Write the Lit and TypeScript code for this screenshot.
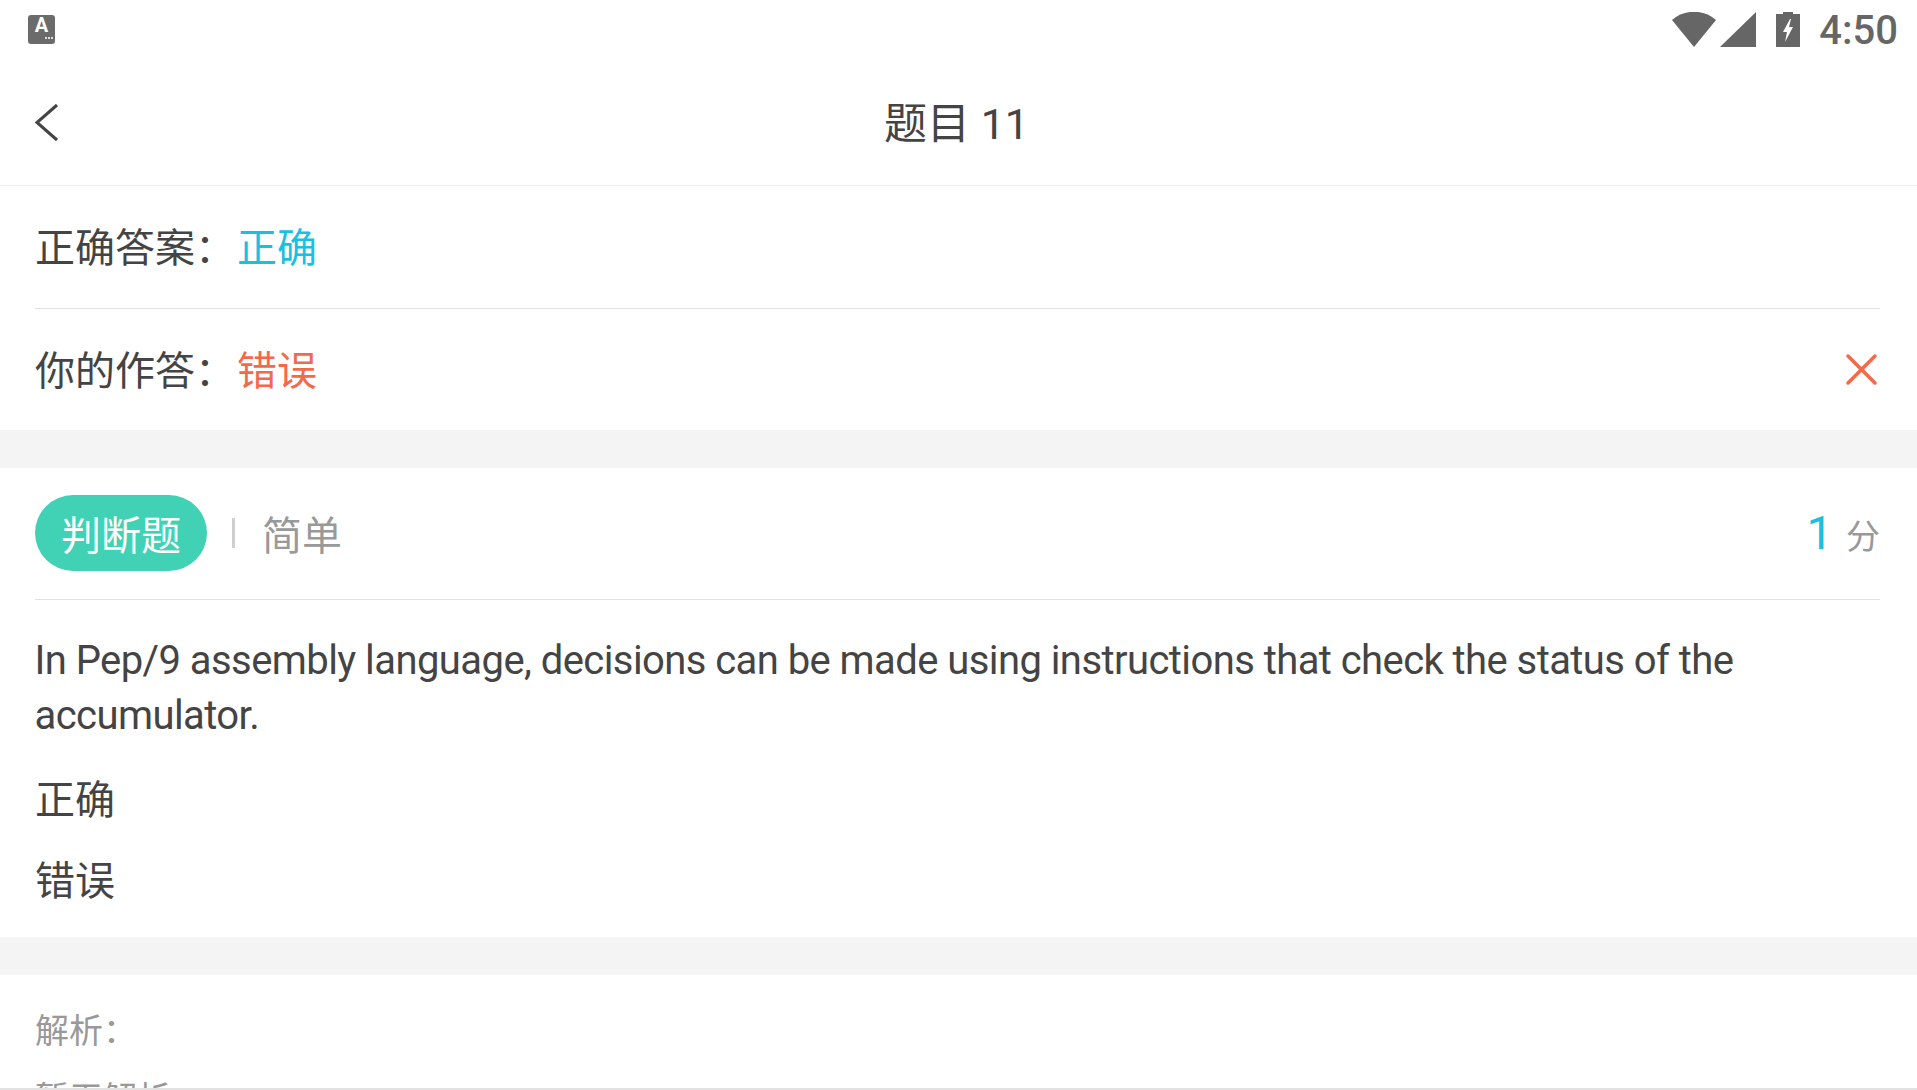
import { LitElement, html, css } from "lit";
import { customElement } from "lit/decorators.js";

@customElement("app-root")
export class AppRoot extends LitElement {
  static styles = css`
    :host {
      display: block;
      width: 1917px;
      height: 1090px;
      overflow: hidden;
      background: #fff;
      color: #444;
      font-family: Roboto, "Noto Sans CJK SC", sans-serif;
      font-size: 40px;
      box-sizing: border-box;
    }
    .frame { height: 1088px; overflow: hidden; }
    .rule { height: 2px; background: #e2e2e2; }
    .status {
      height: 60px;
      display: flex;
      align-items: flex-start;
      justify-content: space-between;
      padding: 12px 19px 0 28px;
      box-sizing: border-box;
    }
    .ime {
      width: 27px; height: 29px; margin-top: 3px;
      background: #6b6b6b; border-radius: 3px;
      color: #fff; font-size: 20px; font-weight: 700;
      display: flex; flex-direction: column; align-items: center;
      line-height: 21px;
    }
    .ime i { display: flex; gap: 1px; align-self: flex-end; margin: 1px 2px 0 0; }
    .ime b { width: 2px; height: 2px; background: #ddd; display: block; }
    .sys { display: flex; align-items: flex-start; color: #666; }
    .sys svg { display: block; fill: #666; }
    .wifi { width: 44px; height: 35px; }
    .signal { width: 36px; height: 35px; margin-left: 4px; }
    .battery { width: 24px; height: 35px; margin-left: 20px; }
    .time { font-size: 40px; font-weight: 500; line-height: 35px; margin: 1px 0 0 19px; }
    .nav {
      height: 126px;
      display: flex;
      align-items: center;
      justify-content: center;
      border-bottom: 1px solid #efefef;
      box-sizing: border-box;
      position: relative;
      font-size: 43px;
    }
    .back { position: absolute; left: 34px; top: 42px; width: 26px; height: 40px; }
    .title { margin: 0 4px 6px 0; }
    .row {
      display: flex;
      align-items: center;
      justify-content: space-between;
    }
    .answers { padding: 0 37px 0 35px; }
    .answers .line { height: 1px; background: #e2e2e2; }
    .answers .row { height: 122px; padding-bottom: 4px; box-sizing: border-box; }
    .answers .row:last-child { height: 121px; padding-bottom: 0; }
    .answers .row:last-child > span { margin-bottom: 4px; }
    .gap { margin-left: 2px; }
    .right { color: #1bbfe0; }
    .wrong { color: #f4694a; }
    .x { width: 33px; height: 33px; display: block; margin-right: 2px; }
    .band { height: 38px; background: #f4f4f4; }
    .question { padding: 0 37px 0 35px; }
    .meta {
      height: 132px;
      padding-bottom: 2px;
      display: flex;
      align-items: center;
      border-bottom: 1px solid #e2e2e2;
      box-sizing: border-box;
    }
    .pill {
      width: 172px; height: 76px;
      border-radius: 38px;
      background: #41d2b6;
      color: #fff;
      display: flex; align-items: center; justify-content: center;
    }
    .sep { width: 3px; height: 30px; background: #cfcfcf; margin: 0 27px 0 25px; }
    .level { color: #999; }
    .score { margin-left: auto; display: flex; align-items: baseline; color: #999; font-size: 34px; }
    .score b { font-weight: 400; font-size: 47px; color: #1bbfe0; margin-right: 13px; }
    .text { margin: 0 0 0 -0.5px; padding-top: 33px; line-height: 55px; font-size: 40px; letter-spacing: -0.57px; }
    .opt { line-height: 81px; }
    .opts { padding: 17px 0 15px; }
    .analysis { padding: 33px 35px 0; color: #999; font-size: 34px; line-height: 46px; }
    .analysis div + div { margin-top: 22px; }
  `;

  render() {
    return html`
      <div class="frame">
        <div class="status">
          <div class="ime">A<i><b></b><b></b><b></b></i></div>
          <div class="sys">
            <svg class="wifi" viewBox="0 0 44 35"><path d="M0 8 C12 -3 32 -3 44 8 L22 35 Z" /></svg>
            <svg class="signal" viewBox="0 0 36 35"><path d="M36 0 V35 H0 Z" /></svg>
            <svg class="battery" viewBox="0 0 24 35">
              <path fill-rule="evenodd" d="M7 2 V0 H17 V2 H24 V35 H0 V2 Z M14 7 L7 20 H11 L9 30 L17 15 H13 L15 7 Z" />
            </svg>
            <span class="time">4:50</span>
          </div>
        </div>
        <div class="nav">
          <svg class="back" viewBox="0 0 26 40" fill="none" stroke="#444" stroke-width="3">
            <path d="M23 3 L3 20.5 L23 38" />
          </svg>
          <span class="title">题目 11</span>
        </div>
        <div class="answers">
          <div class="row"><span>正确答案：<span class="right gap">正确</span></span></div>
          <div class="line"></div>
          <div class="row">
            <span>你的作答：<span class="wrong gap">错误</span></span>
            <svg class="x" viewBox="0 0 33 33" fill="none" stroke="#f4694a" stroke-width="3.5" stroke-linecap="round">
              <path d="M3 3 L30 30 M30 3 L3 30" />
            </svg>
          </div>
        </div>
        <div class="band"></div>
        <div class="question">
          <div class="meta">
            <span class="pill">判断题</span>
            <span class="sep"></span>
            <span class="level">简单</span>
            <span class="score"><b>1</b>分</span>
          </div>
          <p class="text">In Pep/9 assembly language, decisions can be made using instructions that check the status of the accumulator.</p>
          <div class="opts">
            <div class="opt">正确</div>
            <div class="opt">错误</div>
          </div>
        </div>
        <div class="band"></div>
        <div class="analysis">
          <div>解析：</div>
          <div>暂无解析</div>
        </div>
      </div>
      <div class="rule"></div>
    `;
  }
}
